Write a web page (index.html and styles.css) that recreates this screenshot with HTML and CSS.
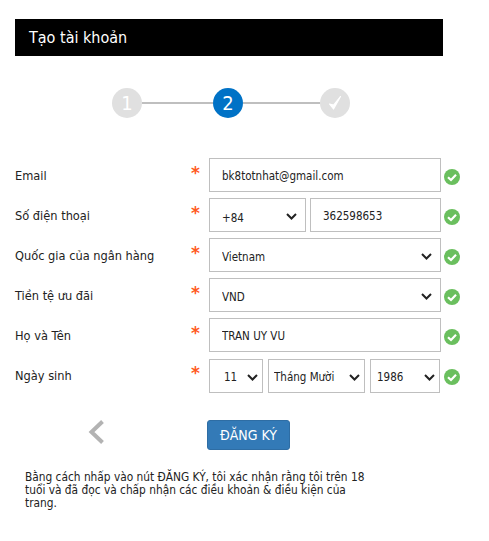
FILE: index.html
```html
<!DOCTYPE html>
<html>

<head>
  <meta charset="UTF-8">
  <title>Tạo tài khoản</title>
  <link rel="stylesheet" href="styles.css">
</head>

<body>
  <h1 class="title">Tạo tài khoản</h1>

  <div class="steps">
    <span class="step">1</span>
    <span class="line line-a"></span>
    <span class="step active">2</span>
    <span class="line line-b"></span>
    <span class="step">
      <svg width="20" height="20" viewBox="0 0 20 20"><path d="M4.5 11 L8.5 16 L15.5 3.5 L8.6 12.2 Z" fill="#fff" stroke="#fff" stroke-width="1.2" stroke-linejoin="round"/></svg>
    </span>
  </div>

  <form class="form">
    <div class="row">
      <label class="label">Email</label>
      <span class="star">*</span>
      <div class="fields"><input class="input grow" value="bk8totnhat@gmail.com"></div>
      <svg class="ok" viewBox="0 0 16 16"><circle cx="8" cy="8" r="8" fill="#6abf5e"/><path d="M4 8.2 L7 11 L12 5.8" fill="none" stroke="#fff" stroke-width="2.2"/></svg>
    </div>
    <div class="row">
      <label class="label">Số điện thoại</label>
      <span class="star">*</span>
      <div class="fields">
        <select class="select code"><option>+84</option></select>
        <input class="input grow" value="362598653">
      </div>
      <svg class="ok" viewBox="0 0 16 16"><circle cx="8" cy="8" r="8" fill="#6abf5e"/><path d="M4 8.2 L7 11 L12 5.8" fill="none" stroke="#fff" stroke-width="2.2"/></svg>
    </div>
    <div class="row">
      <label class="label">Quốc gia của ngân hàng</label>
      <span class="star">*</span>
      <div class="fields"><select class="select grow"><option>Vietnam</option></select></div>
      <svg class="ok" viewBox="0 0 16 16"><circle cx="8" cy="8" r="8" fill="#6abf5e"/><path d="M4 8.2 L7 11 L12 5.8" fill="none" stroke="#fff" stroke-width="2.2"/></svg>
    </div>
    <div class="row">
      <label class="label">Tiền tệ ưu đãi</label>
      <span class="star">*</span>
      <div class="fields"><select class="select grow"><option>VND</option></select></div>
      <svg class="ok" viewBox="0 0 16 16"><circle cx="8" cy="8" r="8" fill="#6abf5e"/><path d="M4 8.2 L7 11 L12 5.8" fill="none" stroke="#fff" stroke-width="2.2"/></svg>
    </div>
    <div class="row">
      <label class="label">Họ và Tên</label>
      <span class="star">*</span>
      <div class="fields"><input class="input grow" value="TRAN UY VU"></div>
      <svg class="ok" viewBox="0 0 16 16"><circle cx="8" cy="8" r="8" fill="#6abf5e"/><path d="M4 8.2 L7 11 L12 5.8" fill="none" stroke="#fff" stroke-width="2.2"/></svg>
    </div>
    <div class="row row-date">
      <label class="label">Ngày sinh</label>
      <span class="star">*</span>
      <div class="fields fields-date">
        <select class="select day"><option>11</option></select>
        <select class="select month"><option>Tháng Mười</option></select>
        <select class="select year"><option>1986</option></select>
      </div>
      <svg class="ok" viewBox="0 0 16 16"><circle cx="8" cy="8" r="8" fill="#6abf5e"/><path d="M4 8.2 L7 11 L12 5.8" fill="none" stroke="#fff" stroke-width="2.2"/></svg>
    </div>

    <div class="actions">
      <svg class="back" width="16" height="24" viewBox="0 0 16 24"><path d="M14.5 1.5 L3.5 12 L14.5 22.5" fill="none" stroke="#b3b3b3" stroke-width="4"/></svg>
      <button class="submit" type="button">ĐĂNG KÝ</button>
    </div>

    <p class="note">Bằng cách nhấp vào nút ĐĂNG KÝ, tôi xác nhận rằng tôi trên 18 tuổi và đã đọc và chấp nhận các điều khoản &amp; điều kiện của trang.</p>
  </form>
</body>

</html>
```

FILE: styles.css
```css
body {
  color: #222;
  font-family: "DejaVu Sans Condensed", "Noto Sans", sans-serif;
  font-size: 12px;
  margin: 0;
  padding: 19px 46px 0 15px;
}

.title {
  background: #000;
  color: #fff;
  font-size: 16px;
  font-weight: 400;
  height: 37px;
  line-height: 38px;
  margin: 0;
  padding-left: 14px;
}

.steps {
  align-items: center;
  display: flex;
  margin: 32px 0 40px 97px;
}

.step {
  align-items: center;
  background: #e0e0e0;
  border-radius: 50%;
  color: #fff;
  display: flex;
  flex: none;
  font-size: 20px;
  height: 30px;
  justify-content: center;
  width: 30px;
}

.step.active {
  background: #0072c6;
}

.line {
  background: #bfbfbf;
  height: 2px;
}

.line-a {
  width: 71px;
}

.line-b {
  width: 77px;
}

.row {
  align-items: flex-start;
  display: flex;
  height: 34px;
  margin-bottom: 6px;
}

.label {
  flex: none;
  font-size: 12.7px;
  line-height: 35px;
  width: 176px;
}

.star {
  color: #ff5a1f;
  flex: none;
  font-family: "DejaVu Sans", sans-serif;
  font-size: 17px;
  font-weight: 700;
  line-height: 30px;
  width: 18px;
}

.fields {
  display: flex;
  flex: none;
  gap: 4px;
  width: 232px;
}

.fields-date {
  gap: 5px;
  margin-top: 1px;
  width: 231px;
}

.grow {
  flex: 1;
  min-width: 0;
}

.input,
.select {
  appearance: none;
  background: #fff;
  border: 1px solid #bfbfbf;
  border-radius: 0;
  box-sizing: border-box;
  color: #222;
  flex: none;
  font-family: "DejaVu Sans Condensed", "Noto Sans", sans-serif;
  font-size: 11.5px;
  height: 34px;
  outline: none;
  padding: 1px 0 0 12px;
}

.grow.input,
.grow.select {
  flex: 1;
}

.select {
  background-image: url("data:image/svg+xml,%3Csvg xmlns='http://www.w3.org/2000/svg' width='11' height='7'%3E%3Cpath d='M1 1 L5.5 5.5 L10 1' fill='none' stroke='%23222' stroke-width='2'/%3E%3C/svg%3E");
  background-position: right 8px top 14px;
  background-repeat: no-repeat;
  padding-top: 4px;
}

.code {
  padding-top: 6px;
  width: 97px;
}

.day,
.month,
.year {
  background-position: right 4px top 14px;
  padding-top: 2px;
}

.day {
  padding-left: 14px;
  width: 54px;
}

.month {
  padding-left: 5px;
  width: 97px;
}

.year {
  padding-left: 6px;
  width: 70px;
}

.ok {
  flex: none;
  height: 16px;
  margin: 11px 0 0 3px;
  width: 16px;
}

.row-date .ok {
  margin-left: 4px;
}

.actions {
  align-items: flex-start;
  display: flex;
  margin-top: 28px;
  padding-left: 73px;
}

.back {
  flex: none;
}

.submit {
  background: #337ab7;
  border: 1px solid #2e6da4;
  border-radius: 3px;
  color: #fff;
  font-family: "DejaVu Sans Condensed", "Noto Sans", sans-serif;
  font-size: 14px;
  height: 30px;
  margin-left: 103px;
  padding: 0;
  width: 83px;
}

.note {
  font-size: 11.8px;
  line-height: 13px;
  margin: 21px 0 0 10px;
  width: 345px;
}
```
